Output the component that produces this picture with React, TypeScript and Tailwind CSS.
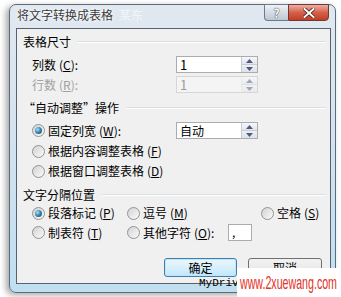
import * as React from 'react';

const Radio: React.FC<{ checked?: boolean }> = ({ checked }) => (
  <span className="flex h-[13px] w-[13px] shrink-0 items-center justify-center rounded-full border border-[#939393] bg-gradient-to-br from-[#d2d2d2] to-[#fbfbfb]">
    {checked && (
      <span className="h-[7px] w-[7px] rounded-full bg-[radial-gradient(circle_at_35%_35%,#a6e0f6,#2a7aa3_55%,#174a68)]" />
    )}
  </span>
);

const Key: React.FC<{ k: string }> = ({ k }) => (
  <span className="ml-[3px]">
    (<span className="underline decoration-1 underline-offset-[1px]">{k}</span>)
  </span>
);

const GroupHeader: React.FC<{ label: string; className?: string }> = ({ label, className }) => (
  <div className={`flex h-[16px] items-center pl-[6px] pr-[4px] ${className ?? ''}`}>
    <span className="whitespace-nowrap text-[12px] leading-none text-black">{label}</span>
    <div className="ml-[7px] flex-1 border-t border-b border-t-[#d5dfe5] border-b-white" />
  </div>
);

const Spinner: React.FC<{ disabled?: boolean }> = ({ disabled }) => (
  <div className={`flex w-[16px] flex-col border-l ${disabled ? 'border-[#e2e2e2] opacity-50' : 'border-[#c7ccd3]'}`}>
    <div className="flex flex-1 items-center justify-center border-b border-[#c7ccd3] bg-gradient-to-b from-[#f6f7f9] to-[#e2e6ec]">
      <svg width="7" height="4" viewBox="0 0 7 4"><path d="M0 4 L3.5 0 L7 4 Z" fill="#4c5c7c" /></svg>
    </div>
    <div className="flex flex-1 items-center justify-center bg-gradient-to-b from-[#eef0f4] to-[#dde2e9]">
      <svg width="7" height="4" viewBox="0 0 7 4"><path d="M0 0 L3.5 4 L7 0 Z" fill="#4c5c7c" /></svg>
    </div>
  </div>
);

const SpinBox: React.FC<{ value: string; disabled?: boolean }> = ({ value, disabled }) => (
  <div className={`ml-auto mr-[72px] flex h-[17px] w-[82px] border ${disabled ? 'border-[#d6d6d6] bg-[#f4f4f4]' : 'border-[#a9acb2] bg-white'}`}>
    <span className={`flex-1 pl-[3px] text-[13px] leading-[15px] ${disabled ? 'text-[#9c9c9c]' : 'text-black'}`}>{value}</span>
    <Spinner disabled={disabled} />
  </div>
);

const App: React.FC = () => {
  return (
    <div className="relative h-[297px] w-[341px] overflow-hidden bg-white font-['Noto_Sans_CJK_SC','Microsoft_YaHei',sans-serif]">
      <div className="ml-[9px] mt-[4px] flex h-[289px] w-[327px] flex-col rounded-[7px] border border-[#5d6c7a] bg-gradient-to-b from-[#e1e8f0] via-[#d3e2ef] to-[#bfdff1] shadow-[-3px_2px_6px_rgba(0,0,0,0.35)]">
        {/* title bar */}
        <div className="flex h-[23px] items-start justify-between pl-[7px] pr-[6px]">
          <div className="flex items-center pt-[2px] text-[12px] leading-[16px]">
            <span className="text-[#3a3a3a] [text-shadow:0_0_4px_#fff,0_0_2px_#fff]">将文字转换成表格</span>
            <span className="ml-[6px] text-white opacity-60">某东</span>
          </div>
          <div className="-mt-[1px] flex">
            <div className="flex h-[17px] w-[24px] items-center justify-center rounded-bl-[4px] border border-r-0 border-[#6c7a8a] bg-gradient-to-b from-[#eef2f6] via-[#d4dce5] to-[#bcc8d6] text-[12px] font-bold leading-none text-white [text-shadow:0_0_1px_#333,0_0_1px_#333]">
              ?
            </div>
            <div className="flex h-[17px] w-[41px] items-center justify-center rounded-br-[4px] border border-[#6c3a32] bg-gradient-to-b from-[#eab0a3] via-[#d4604a] to-[#c23d22]">
              <svg width="12" height="10" viewBox="0 0 12 10">
                <path d="M1.5 1 L10.5 9 M10.5 1 L1.5 9" stroke="#4a1d14" strokeWidth="3.6" strokeLinecap="square" />
                <path d="M1.5 1 L10.5 9 M10.5 1 L1.5 9" stroke="#ffffff" strokeWidth="2" strokeLinecap="square" />
              </svg>
            </div>
          </div>
        </div>

        {/* client area */}
        <div className="ml-[6px] flex h-[256px] w-[315px] flex-col border border-[#56636f] bg-[#f0f0f0] text-[12px] text-black">
          <GroupHeader label="表格尺寸" className="mt-[5px]" />
          <div className="mt-[6px] flex h-[17px] items-center pl-[15px]">
            <span className="leading-none">列数<Key k="C" />:</span>
            <SpinBox value="1" />
          </div>
          <div className="mt-[3px] flex h-[17px] items-center pl-[15px]">
            <span className="leading-none text-[#a0a0a0]">行数<Key k="R" />:</span>
            <SpinBox value="1" disabled />
          </div>

          <GroupHeader label="“自动调整”操作" className="mt-[7px]" />
          <div className="mt-[4px] flex h-[21px] items-center pl-[15px]">
            <Radio checked />
            <span className="ml-[3px] leading-none">固定列宽<Key k="W" />:</span>
            <div className="ml-auto mr-[72px] flex h-[17px] w-[82px] border border-[#a9acb2] bg-white">
              <span className="flex-1 pl-[3px] text-[12px] leading-[15px]">自动</span>
              <Spinner />
            </div>
          </div>
          <div className="flex h-[20px] items-center pl-[15px]">
            <Radio />
            <span className="ml-[3px] leading-none">根据内容调整表格<Key k="F" /></span>
          </div>
          <div className="flex h-[20px] items-center pl-[15px]">
            <Radio />
            <span className="ml-[3px] leading-none">根据窗口调整表格<Key k="D" /></span>
          </div>

          <GroupHeader label="文字分隔位置" className="mt-[6px]" />
          <div className="mt-[1px] grid h-[18px] grid-cols-[95px_134px_1fr] items-center pl-[15px]">
            <div className="flex items-center"><Radio checked /><span className="ml-[3px] leading-none">段落标记<Key k="P" /></span></div>
            <div className="flex items-center"><Radio /><span className="ml-[3px] leading-none">逗号<Key k="M" /></span></div>
            <div className="flex items-center"><Radio /><span className="ml-[3px] leading-none">空格<Key k="S" /></span></div>
          </div>
          <div className="mt-[1px] grid h-[19px] grid-cols-[95px_134px_1fr] items-center pl-[15px]">
            <div className="flex items-center"><Radio /><span className="ml-[3px] leading-none">制表符<Key k="T" /></span></div>
            <div className="flex items-center">
              <Radio />
              <span className="ml-[3px] leading-none">其他字符<Key k="O" />:</span>
              <div className="ml-auto mr-[9px] h-[17px] w-[24px] border border-[#a9acb2] bg-white pl-[3px] text-[12px] leading-[13px]">,</div>
            </div>
            <div />
          </div>

          <div className="mt-[16px] flex pl-[147px]">
            <button className="flex h-[19px] w-[73px] items-center justify-center rounded-[3px] border border-[#3c7fb1] bg-gradient-to-b from-[#eaf6fd] via-[#d9f0fc] to-[#bee6fd] text-[12px] leading-none shadow-[inset_0_0_0_1px_#c4e5f6]">
              确定
            </button>
            <button className="ml-[11px] flex h-[19px] w-[74px] items-start justify-center rounded-[3px] border border-[#707070] bg-gradient-to-b from-[#f2f2f2] via-[#ebebeb] to-[#cfcfcf] pt-[3px] text-[12px] leading-none">
              取消
            </button>
          </div>
        </div>
      </div>

      {/* watermark overlays */}
      <div className="absolute left-[199px] top-[277px] font-['Liberation_Mono',monospace] text-[11px] leading-[12px] text-black">
        MyDriv
      </div>
      <div className="absolute left-[237px] top-[268px] flex h-[29px] w-[104px] items-center overflow-hidden bg-white">
        <span className="ml-[3px] origin-left scale-x-[0.56] whitespace-nowrap font-['Liberation_Sans',sans-serif] text-[19px] leading-none text-[#e2312a]">
          www.2xuewang.com
        </span>
      </div>
    </div>
  );
};

export default App;
